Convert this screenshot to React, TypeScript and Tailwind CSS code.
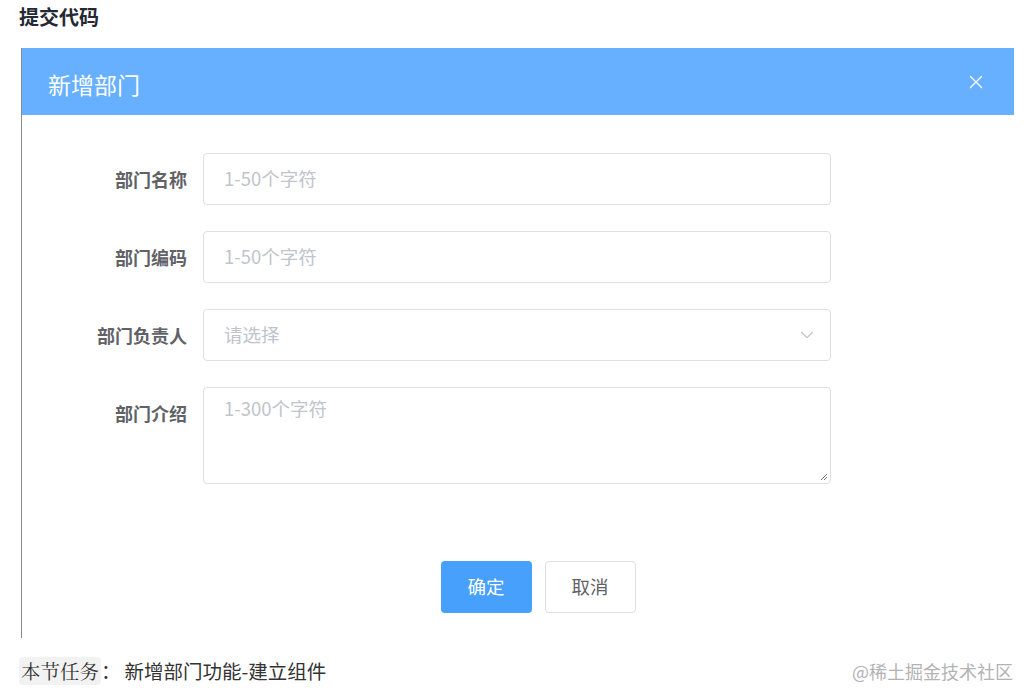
import { ChevronDown, X } from 'lucide-react';

const font = { fontFamily: '"Noto Sans CJK SC", "Noto Sans", sans-serif' };

const Label = ({ children }: { children: string }) => (
    <div className="w-[181px] shrink-0 pr-4 text-right text-[18px] font-bold leading-[52px] text-[#606266]">{children}</div>
);

export default function App() {
    return (
        <div className="h-[695px] w-[1033px] overflow-hidden bg-white" style={font}>
            <div className="px-[19px] pt-[4px] text-[20px] font-bold leading-[26px] text-[#252933]">提交代码</div>

            <div className="ml-[21px] mt-[18px] h-[590px] w-[993px] border-l border-[#8a8a8a]">
                <div className="flex h-[67px] items-center justify-between bg-[#66b0ff] pl-[26px] pr-[27px]">
                    <span className="pt-[6px] text-[23px] text-white">新增部门</span>
                    <X size={22} strokeWidth={1.5} className="text-white" />
                </div>

                <div className="flex flex-col gap-[26px] pt-[38px]">
                    <div className="flex">
                        <Label>部门名称</Label>
                        <div className="flex h-[52px] w-[628px] items-center rounded border border-[#dcdfe6] px-5 text-[18.5px] text-[#c0c4cc]">1-50个字符</div>
                    </div>
                    <div className="flex">
                        <Label>部门编码</Label>
                        <div className="flex h-[52px] w-[628px] items-center rounded border border-[#dcdfe6] px-5 text-[18.5px] text-[#c0c4cc]">1-50个字符</div>
                    </div>
                    <div className="flex">
                        <Label>部门负责人</Label>
                        <div className="flex h-[52px] w-[628px] items-center justify-between rounded border border-[#dcdfe6] pl-5 pr-3 text-[18.5px] text-[#c0c4cc]">
                            <span>请选择</span>
                            <ChevronDown size={22} strokeWidth={1.2} className="text-[#c0c4cc]" />
                        </div>
                    </div>
                    <div className="flex">
                        <Label>部门介绍</Label>
                        <div className="relative h-[97px] w-[628px] rounded border border-[#dcdfe6] px-5 pt-[6px] text-[18.5px] leading-[28px] text-[#c0c4cc]">
                            1-300个字符
                            <svg className="absolute bottom-[2px] right-[2px]" width="10" height="10" viewBox="0 0 10 10">
                                <path d="M9 3 L3 9 M9 6 L6 9" stroke="#777" strokeWidth="1" />
                            </svg>
                        </div>
                    </div>
                </div>

                <div className="mt-[77px] flex justify-center gap-[13px] pl-[40px]">
                    <button className="h-[52px] w-[91px] rounded bg-[#46a0fc] text-[18.5px] text-white">确定</button>
                    <button className="h-[52px] w-[91px] rounded border border-[#dcdfe6] bg-white text-[18.5px] text-[#606266]">取消</button>
                </div>
            </div>

            <div className="flex items-center justify-between pl-[19px] pr-[20px] pt-[18px]">
                <div className="text-[19.5px] text-[#333]">
                    <span className="rounded-sm bg-[#f2f2f2] px-[2px]" style={{ fontFamily: '"Noto Serif CJK SC", "Noto Sans CJK SC", serif' }}>本节任务</span>：
                    <span className="ml-1">新增部门功能-建立组件</span>
                </div>
                <div className="text-[18px] text-[#b3b3b3]">@稀土掘金技术社区</div>
            </div>
        </div>
    );
}
